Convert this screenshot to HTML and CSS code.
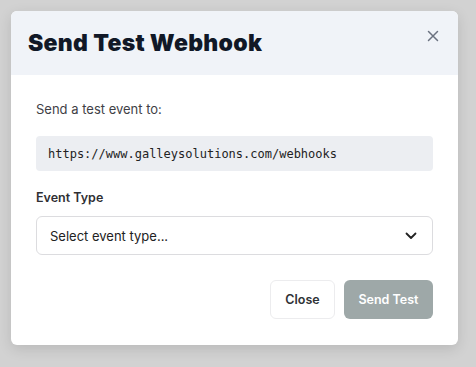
FILE: index.html
```html
<!DOCTYPE html>
<html lang="en">
  <head>
    <meta charset="utf-8" />
    <title>Send Test Webhook</title>
    <link rel="stylesheet" href="styles.css">
  </head>
  <body>
    <div class="backdrop">
      <div class="modal">
        <div class="modal-header">
          <h2 class="modal-title">Send Test Webhook</h2>
          <button class="close-x" aria-label="Close">
            <svg width="12" height="12" viewBox="0 0 12 12"><path d="M1.5 1.5l9 9M10.5 1.5l-9 9" stroke="#6b7280" stroke-width="1.5" stroke-linecap="round"/></svg>
          </button>
        </div>
        <div class="modal-body">
          <p class="intro">Send a test event to:</p>
          <div class="url-box">https://www.galleysolutions.com/webhooks</div>
          <label class="field-label">Event Type</label>
          <div class="select">
            <span>Select event type...</span>
            <svg width="12" height="8" viewBox="0 0 12 8"><path d="M1.5 1.5l4.5 4.5 4.5-4.5" fill="none" stroke="#222" stroke-width="1.8" stroke-linecap="round" stroke-linejoin="round"/></svg>
          </div>
          <div class="actions">
            <button class="btn btn-secondary">Close</button>
            <button class="btn btn-primary" disabled>Send Test</button>
          </div>
        </div>
      </div>
    </div>
  </body>
</html>
```

FILE: styles.css
```css
body {
  margin: 0;
  font-family: 'Inter', 'Lato', sans-serif;
  -webkit-font-smoothing: antialiased;
  background-color: #d2d2d2;
}

.backdrop {
  padding: 11px 18px 22px 11px;
}

.modal {
  width: 447px;
  background: white;
  border-radius: 6px;
  box-shadow: 0 4px 14px rgba(0,0,0,0.12);
  overflow: hidden;
}

.modal-header {
  display: flex;
  justify-content: space-between;
  align-items: flex-start;
  height: 64px;
  box-sizing: border-box;
  padding: 18px 19px 0 17px;
  background: #f0f3f8;
}

.modal-title {
  margin: 0;
  font-size: 23px;
  font-weight: 900;
  color: #111827;
  letter-spacing: 0.3px;
  line-height: 28px;
}

.close-x {
  border: none;
  background: none;
  padding: 0;
  margin-top: 1px;
  cursor: pointer;
  width: 12px;
  height: 12px;
  display: flex;
}

.modal-body {
  padding: 26px 25px 26px 25px;
}

.intro {
  margin: 0 0 19px;
  font-size: 13px;
  color: #3f3f46;
  line-height: 16px;
}

.url-box {
  background: #eceef2;
  border-radius: 4px;
  height: 35px;
  box-sizing: border-box;
  padding: 0 12px;
  display: flex;
  align-items: center;
  font-family: 'DejaVu Sans Mono', monospace;
  font-size: 12px;
  color: #222;
}

.field-label {
  display: block;
  margin: 19px 0 10px;
  font-size: 12.5px;
  font-weight: 600;
  color: #2f2f33;
  line-height: 16px;
}

.select {
  display: flex;
  justify-content: space-between;
  align-items: center;
  height: 39px;
  box-sizing: border-box;
  padding: 0 15px 0 13px;
  border: 1px solid #dcdcdf;
  border-radius: 6px;
  font-size: 13px;
  color: #222;
}

.actions {
  display: flex;
  justify-content: flex-end;
  gap: 9px;
  margin-top: 25px;
}

.btn {
  height: 39px;
  border-radius: 6px;
  font-family: inherit;
  font-size: 12.5px;
  font-weight: 600;
  cursor: pointer;
}

.btn-secondary {
  width: 65px;
  background: white;
  border: 1px solid #ececee;
  color: #2f3336;
}

.btn-primary {
  width: 89px;
  background: #9ea8a8;
  border: none;
  color: white;
}

.btn-primary:disabled {
  cursor: not-allowed;
}
```
